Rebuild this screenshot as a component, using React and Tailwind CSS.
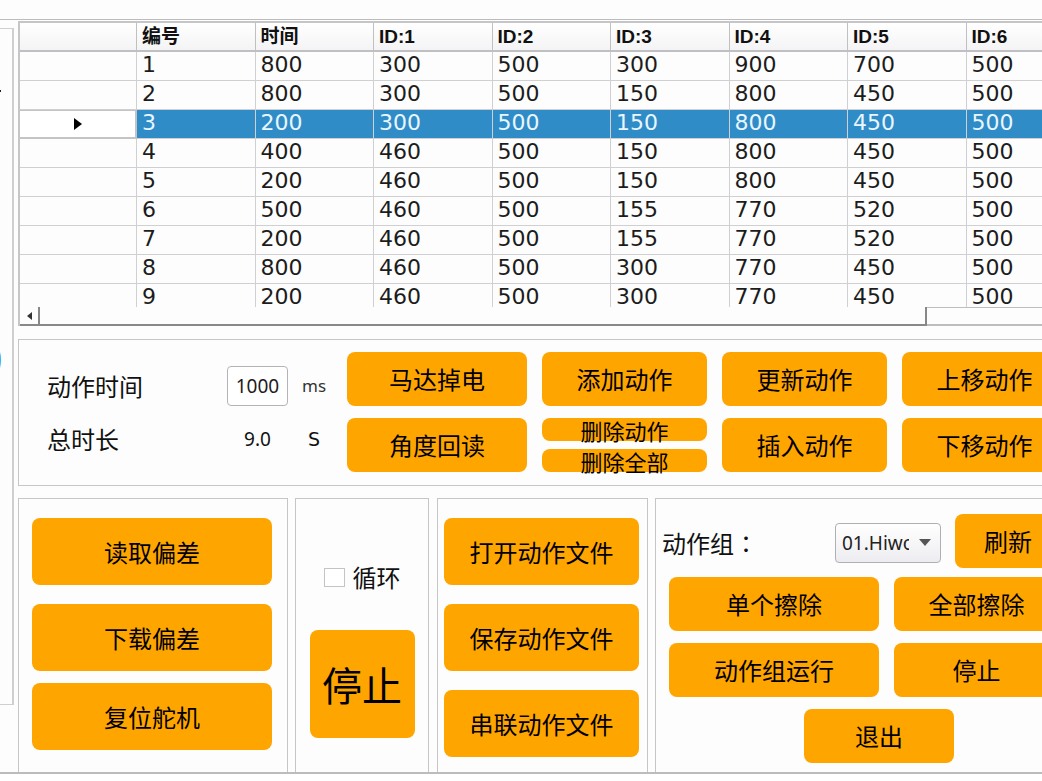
import React from 'react';

const columns = ['编号', '时间', 'ID:1', 'ID:2', 'ID:3', 'ID:4', 'ID:5', 'ID:6'];

const rows = [
  [1, 800, 300, 500, 300, 900, 700, 500],
  [2, 800, 300, 500, 150, 800, 450, 500],
  [3, 200, 300, 500, 150, 800, 450, 500],
  [4, 400, 460, 500, 150, 800, 450, 500],
  [5, 200, 460, 500, 150, 800, 450, 500],
  [6, 500, 460, 500, 155, 770, 520, 500],
  [7, 200, 460, 500, 155, 770, 520, 500],
  [8, 800, 460, 500, 300, 770, 450, 500],
  [9, 200, 460, 500, 300, 770, 450, 500],
];

const selectedId = 3;

function Button({ className, children }) {
  return (
    <button
      type="button"
      className={`flex shrink-0 items-center justify-center whitespace-nowrap rounded-lg bg-[#ffa500] text-black ${className}`}
    >
      {children}
    </button>
  );
}

function ActionTable() {
  return (
    <section className="border-l-2 border-t-2 border-[#c6c6c8]">
      <div className="h-[284px] overflow-hidden">
        <table className="w-[1065px] table-fixed border-separate border-spacing-0 text-left">
          <thead>
            <tr className="h-[29px] bg-linear-to-b from-white to-[#f3f3f5] font-['Liberation_Sans','Noto_Sans_CJK_SC',sans-serif] text-[19px] leading-6">
              <td className="w-[117px] border-b-2 border-r border-[#c0c0c2] p-0" />
              {columns.map((name) => (
                <th key={name} scope="col" className="border-b-2 border-r border-[#c0c0c2] p-0 pl-[5px] font-bold">
                  {name}
                </th>
              ))}
            </tr>
          </thead>
          <tbody className="font-['DejaVu_Sans',sans-serif] text-[22px] leading-6 text-[#1c1c1c]">
            {rows.map((row) => {
              const selected = row[0] === selectedId;
              return (
                <tr key={row[0]} className={selected ? 'h-[29px] bg-[#308cc6] text-[#e8f6ff]' : 'h-[29px]'}>
                  <td
                    className={
                      selected
                        ? 'border-b-2 border-r-2 border-t border-[#c4c4c6] bg-white p-0'
                        : 'border-b border-r border-[#d0d0d2] p-0'
                    }
                  >
                    {selected && (
                      <svg viewBox="0 0 8 12" className="mx-auto h-3 w-2 fill-black" aria-hidden="true">
                        <path d="M0 0L8 6L0 12Z" />
                      </svg>
                    )}
                  </td>
                  {row.map((value, i) => (
                    <td key={columns[i]} className="border-b border-r border-[#d0d0d2] p-0 pb-0.5 pl-[5px]">
                      {value}
                    </td>
                  ))}
                </tr>
              );
            })}
          </tbody>
        </table>
      </div>
      <div className="flex h-[19px]">
        <div className="flex w-5 items-center justify-center border-b-2 border-r-2 border-[#888]">
          <svg viewBox="0 0 5 8" className="h-2 w-[5px] fill-[#333]" aria-hidden="true">
            <path d="M5 0L0 4L5 8Z" />
          </svg>
        </div>
        <div className="w-[887px] border-b-2 border-r-2 border-[#888]" />
        <div className="flex-1 border-b-2 border-t border-[#bebebe]" />
      </div>
    </section>
  );
}

function MotionPanel() {
  return (
    <section className="mt-[13px] flex h-[147px] border-y border-l border-[#c6c6c6] pl-7 pt-3">
      <div className="grid w-[300px] shrink-0 grid-cols-[180px_61px_1fr] grid-rows-[40px_40px] content-start items-center gap-y-[13px] pt-[14px]">
        <label htmlFor="motion-time">动作时间</label>
        <input
          id="motion-time"
          defaultValue="1000"
          className="h-10 w-full rounded border border-[#b4b4b6] bg-white text-center font-['Noto_Sans',sans-serif] text-[19px] text-[#1c1c1c]"
        />
        <span className="pl-[14px] font-['Noto_Sans',sans-serif] text-[17px] text-[#333]">ms</span>
        <span>总时长</span>
        <output className="text-center font-['Noto_Sans',sans-serif] text-[19px]">9.0</output>
        <span className="pl-5 font-['DejaVu_Sans',sans-serif] text-[19px]">S</span>
      </div>
      <div className="grid shrink-0 grid-cols-[180px_165px_165px_165px] content-start gap-x-[15px] gap-y-3">
        <Button className="h-[54px]">马达掉电</Button>
        <Button className="h-[54px]">添加动作</Button>
        <Button className="h-[54px]">更新动作</Button>
        <Button className="h-[54px]">上移动作</Button>
        <Button className="h-[54px]">角度回读</Button>
        <div className="flex flex-col justify-between text-[22px] leading-5">
          <Button className="h-[23px]">删除动作</Button>
          <Button className="h-[23px]">删除全部</Button>
        </div>
        <Button className="h-[54px]">插入动作</Button>
        <Button className="h-[54px]">下移动作</Button>
      </div>
    </section>
  );
}

function GroupPanel() {
  return (
    <section className="flex-1 border-l border-t border-[#c6c6c6] pl-[6px] pt-[15px]">
      <div className="flex items-center">
        <label
          htmlFor="action-group"
          className="w-[173px] shrink-0 pt-1 font-['Noto_Sans_CJK_SC',sans-serif]"
        >
          动作组<span lang="zh-TW" className="font-['Noto_Sans_CJK_TC',sans-serif]">：</span>
        </label>
        <div className="relative mt-1 w-[106px] shrink-0">
          <select
            id="action-group"
            className="h-10 w-full appearance-none overflow-hidden rounded border border-[#b0b0b2] bg-linear-to-b from-white to-[#ededf1] pl-[6px] pr-[31px] font-['Noto_Sans',sans-serif] text-[19px] text-[#222] [text-overflow:clip]"
          >
            <option>01.Hiwonder</option>
          </select>
          <svg
            viewBox="0 0 12 7"
            className="pointer-events-none absolute right-[10px] top-4 h-[7px] w-3 fill-[#555]"
            aria-hidden="true"
          >
            <path d="M0 0H12L6 7Z" />
          </svg>
        </div>
        <Button className="ml-[14px] h-[54px] w-[106px]">刷新</Button>
      </div>
      <div className="mt-[9px] grid grid-cols-[210px_165px] gap-x-[15px] gap-y-3 pl-[7px]">
        <Button className="h-[54px]">单个擦除</Button>
        <Button className="h-[54px]">全部擦除</Button>
        <Button className="h-[54px]">动作组运行</Button>
        <Button className="h-[54px]">停止</Button>
        <Button className="ml-[135px] h-[54px] w-[150px]">退出</Button>
      </div>
    </section>
  );
}

export default function App() {
  return (
    <div className="overflow-hidden bg-[#fdfdfd] pt-[19px] font-['Noto_Sans_CJK_SC',sans-serif] text-2xl leading-6 text-[#111]">
      <main className="flex border-b-2 border-t border-[#bcbcbc]">
        <aside className="mt-2 flex h-[677px] w-[14px] shrink-0 flex-col border-y border-r-2 border-[#cfcfcf]">
          <svg viewBox="0 0 2 350" className="h-[350px] w-[2px]" aria-hidden="true">
            <rect x="0" y="61" width="1" height="2" fill="#222" />
            <ellipse cx="-3" cy="331" rx="4" ry="12" fill="#29b6f6" />
          </svg>
        </aside>
        <div className="ml-1 mt-px min-w-0 flex-1">
          <ActionTable />
          <MotionPanel />
          <div className="mt-3 flex h-[274px]">
            <section className="flex w-[270px] shrink-0 flex-col border-x border-t border-[#c6c6c6] pl-[13px] pt-[19px]">
              <Button className="mb-[19px] h-[67px] w-[240px]">读取偏差</Button>
              <Button className="mb-3 h-[67px] w-[240px]">下载偏差</Button>
              <Button className="h-[67px] w-[240px]">复位舵机</Button>
            </section>
            <section className="ml-[7px] flex w-[134px] shrink-0 flex-col items-center border-x border-t border-[#c6c6c6] pt-[66px]">
              <label className="flex items-center gap-2">
                <input type="checkbox" className="h-[19px] w-[21px] appearance-none border border-[#c4c4c6] bg-white" />
                循环
              </label>
              <Button className="mt-[41px] h-[108px] w-[105px] text-[40px]">停止</Button>
            </section>
            <section className="ml-2 flex w-[211px] shrink-0 flex-col gap-[19px] border-x border-t border-[#c6c6c6] pl-[6px] pt-[19px]">
              <Button className="h-[67px] w-[195px]">打开动作文件</Button>
              <Button className="h-[67px] w-[195px]">保存动作文件</Button>
              <Button className="h-[67px] w-[195px]">串联动作文件</Button>
            </section>
            <div className="w-[7px] shrink-0" />
            <GroupPanel />
          </div>
        </div>
      </main>
    </div>
  );
}
